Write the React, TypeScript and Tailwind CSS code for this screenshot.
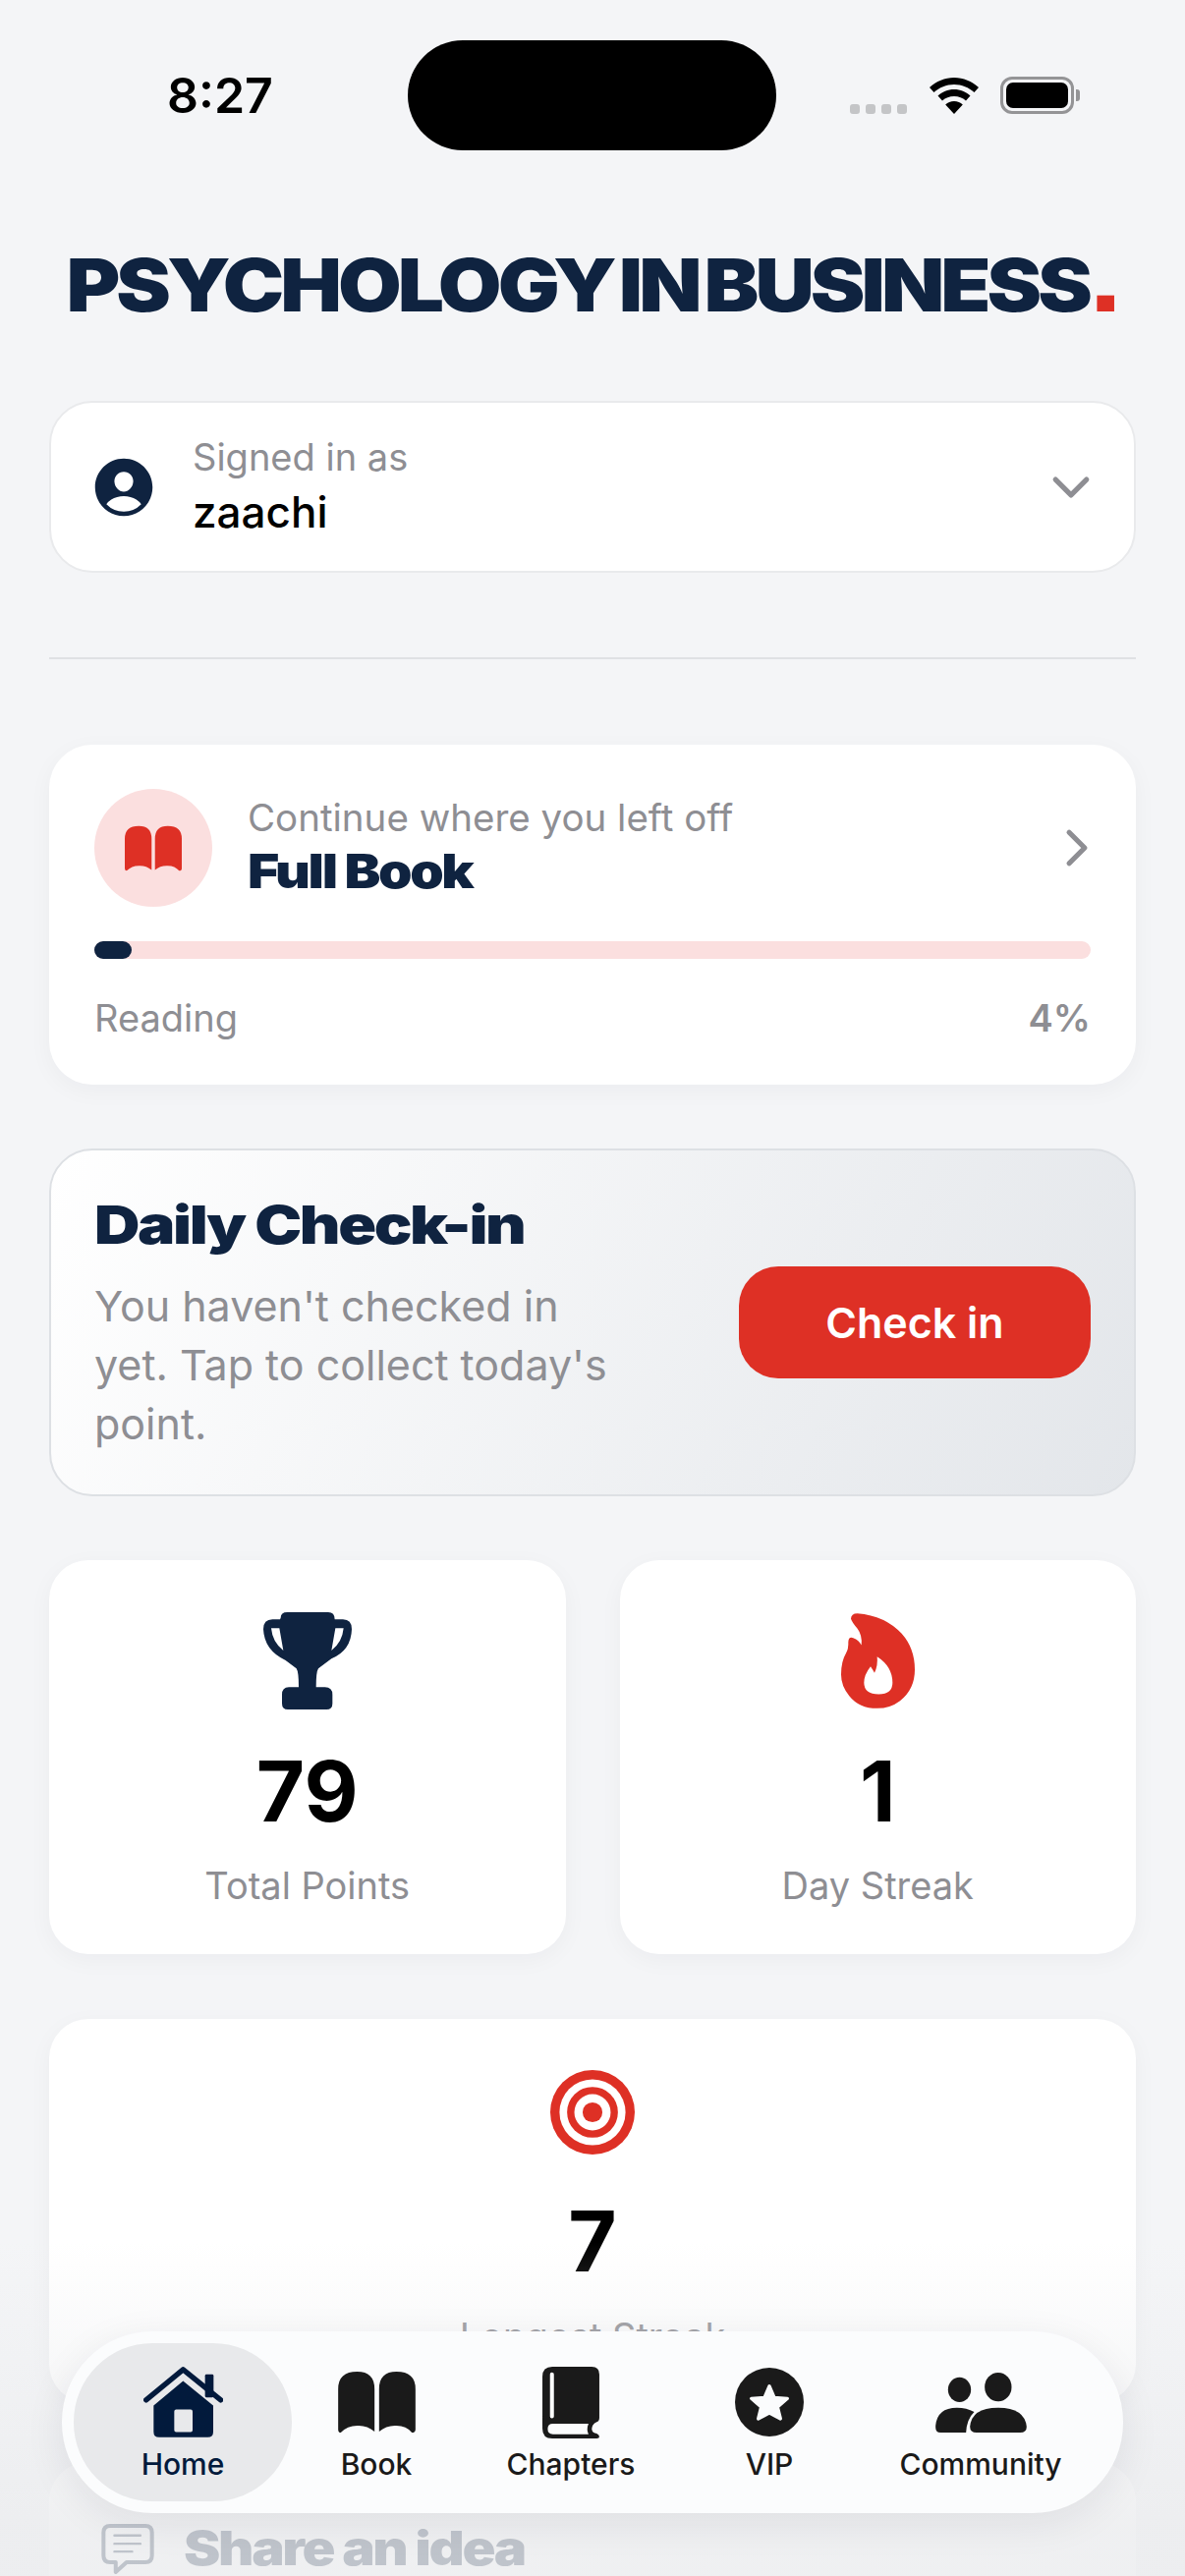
import { IoPersonCircle, IoChevronDown, IoChevronForward } from "react-icons/io5";
import type { ReactNode } from "react";

const NAVY = "#0f2340";
const RED = "#de3025";

const BookGlyph = ({ w, h, color }: { w: number; h: number; color: string }) => (
  <svg width={w} height={h} viewBox="637 42 236 186" fill={color}>
    <path d="M637 95Q637 42 695 42Q748 42 748 95V225Q725 205 695 207Q665 207 645 228Q637 228 637 218Z" />
    <path d="M762 95Q762 42 815 42Q873 42 873 95V218Q873 228 862 228Q845 207 815 207Q785 205 762 225Z" />
  </svg>
);

const TrophyIcon = () => (
  <svg width="90" height="99" viewBox="57 33 270 297">
    <path
      fill={NAVY}
      fillRule="evenodd"
      d="M110 50Q110 33 130 33H255Q275 33 275 55H300Q327 55 327 85Q325 150 265 175L225 205Q218 215 218 262H245Q268 262 268 285V312Q268 330 250 330H132Q114 330 114 312V285Q114 262 135 262H165Q165 215 158 205L125 180Q60 150 57 85Q57 55 85 55H108ZM81 82H106L118 150Q85 125 81 82ZM302 82H277L265 150Q298 125 302 82Z"
    />
  </svg>
);

const FlameIcon = () => (
  <svg width="75" height="97" viewBox="75 38 225 290">
    <path
      fill={RED}
      fillRule="evenodd"
      d="M105 55Q105 38 125 38Q210 45 260 100Q300 145 300 210Q300 270 255 305Q225 328 185 328Q130 328 100 290Q75 260 75 225Q75 185 90 160Q98 145 97 125Q98 108 112 113Q130 120 137 135Q140 105 125 85Q108 65 105 55ZM185 170Q232 200 232 250Q232 285 190 285Q145 285 145 250Q145 225 165 200Q172 210 177 220Q188 195 185 170Z"
    />
  </svg>
);

const TargetIcon = () => (
  <svg width="86" height="86" viewBox="0 0 256 256">
    <circle cx="128" cy="128" r="128" fill={RED} />
    <circle cx="128" cy="128" r="100" fill="#fff" />
    <circle cx="128" cy="128" r="77" fill={RED} />
    <circle cx="128" cy="128" r="55" fill="#fff" />
    <circle cx="128" cy="128" r="30" fill={RED} />
  </svg>
);

const HomeIcon = () => (
  <svg width="81" height="72" viewBox="42 27 243 215" fill="#021a3c">
    <rect x="230" y="50" width="26" height="70" rx="4" />
    <path d="M50 128L163 35L278 128" fill="none" stroke="#021a3c" strokeWidth="16" strokeLinecap="round" strokeLinejoin="round" />
    <path
      fillRule="evenodd"
      d="M163 70L255 145V225Q255 242 238 242H90Q73 242 73 225V145ZM142 157Q136 157 136 163V220Q136 226 142 226H186Q192 226 192 220V163Q192 157 186 157Z"
    />
  </svg>
);

const ChaptersIcon = () => (
  <svg width="58" height="73" viewBox="40 25 173 218">
    <path
      fill="#1a1a1a"
      fillRule="evenodd"
      d="M70 25H190Q213 25 213 48V180Q213 190 205 193Q190 200 190 215Q192 228 205 228Q213 232 213 238Q213 243 205 243H70Q40 243 40 213V55Q40 25 70 25ZM69 42Q63 42 63 48V176Q63 182 69 182Q75 182 75 176V48Q75 42 69 42ZM72 198Q56 198 56 214Q56 230 72 230H180Q173 215 180 198Z"
    />
  </svg>
);

const VipIcon = () => (
  <svg width="70" height="70" viewBox="615 28 210 210">
    <circle cx="720" cy="133" r="105" fill="#1a1a1a" />
    <path
      d="M720 84L735 119L775 122L745 148L754 184L720 166L686 184L695 148L665 122L705 119Z"
      fill="#fbfcfd"
      stroke="#fbfcfd"
      strokeWidth="10"
      strokeLinejoin="round"
    />
  </svg>
);

const CommunityIcon = () => (
  <svg width="93" height="61" viewBox="40 43 278 183" fill="#1a1a1a">
    <ellipse cx="113" cy="95" rx="35" ry="38" />
    <ellipse cx="231" cy="87" rx="41" ry="44" />
    <path d="M40 205Q45 150 105 150Q135 150 158 163Q135 185 133 226H55Q40 226 40 210Z" />
    <path d="M145 208Q150 150 230 150Q312 150 318 208Q318 226 298 226H165Q145 226 145 208Z" />
  </svg>
);

const ShareIcon = () => (
  <svg width="54" height="51" viewBox="38 42 161 152" fill="none" stroke={NAVY} strokeLinecap="round" strokeLinejoin="round">
    <path d="M65 48H172Q192 48 192 68V138Q192 158 172 158H115L82 188V158H65Q45 158 45 138V68Q45 48 65 48Z" strokeWidth="12" />
    <path d="M78 77H157M78 102H157M78 126H132" strokeWidth="7" />
  </svg>
);

const StatCard = ({ icon, value, label }: { icon: ReactNode; value: string; label: string }) => {
  return (
    <div className="flex-1 h-[401px] bg-white rounded-[40px] flex flex-col items-center pt-[52px] shadow-[0_6px_24px_rgba(20,30,50,0.04)]">
      <div className="h-[100px] flex items-center justify-center">{icon}</div>
      <p className="mt-[36px] text-[85px] leading-[96px] font-bold text-black">{value}</p>
      <p className="mt-[24px] text-[38px] leading-[46px] text-[#8e8e93]">{label}</p>
    </div>
  );
};

const NavItem = ({ icon, label, width, active }: { icon: ReactNode; label: string; width: string; active?: boolean }) => (
  <div
    className={`${width} h-[161px] flex flex-col items-center pt-[22px] rounded-[80px] ${active ? "bg-[#e8e9eb] text-[#021a3c]" : "text-[#1a1a1a]"}`}
  >
    <div className="h-[76px] flex items-center justify-center">{icon}</div>
    <span className="mt-[6px] text-[30px] leading-[38px] font-medium">{label}</span>
  </div>
);

export default function App() {
  return (
    <div className="relative w-[1206px] h-[2622px] overflow-hidden bg-[#f4f5f7] font-['Inter',sans-serif]">
      {/* status bar */}
      <div className="flex items-center h-[112px] mt-[41px] pl-[170px]">
        <span className="w-[245px] text-[50px] font-semibold text-black">8:27</span>
        <div className="w-[375px] h-[112px] rounded-[56px] bg-black" />
        <div className="flex items-center ml-[75px]">
          <div className="flex gap-[6px] mt-[28px]">
            <span className="w-[10px] h-[10px] rounded-[3px] bg-[#c4c5c7]" />
            <span className="w-[10px] h-[10px] rounded-[3px] bg-[#c4c5c7]" />
            <span className="w-[10px] h-[10px] rounded-[3px] bg-[#c4c5c7]" />
            <span className="w-[10px] h-[10px] rounded-[3px] bg-[#c4c5c7]" />
          </div>
          <svg className="ml-[23px]" width="50" height="37" viewBox="0 0 50 37">
            <path d="M25 0C15.500 0 7 3.700 0 10l4.500 5C10 10 17 7 25 7s15 3 20.500 8L50 10C43 3.700 34.500 0 25 0Z" fill="#000" />
            <path d="M25 12c-6.500 0-12 2.500-16.500 6.500l4.500 5c3.200-2.900 7.300-4.500 12-4.500s8.800 1.600 12 4.500l4.500-5C37 14.500 31.500 12 25 12Z" fill="#000" />
            <path d="M25 24c-3.500 0-6.500 1.300-8.800 3.400L25 37l8.800-9.600C31.500 25.300 28.500 24 25 24Z" fill="#000" />
          </svg>
          <div className="ml-[22px] w-[75px] h-[38px] rounded-[12px] border-[3px] border-[#949496] p-[3px]">
            <div className="w-full h-full rounded-[7px] bg-black" />
          </div>
          <div className="ml-[2px] w-[4px] h-[12px] rounded-r-[3px] bg-[#949496]" />
        </div>
      </div>

      <div className="px-[50px]">
        {/* title */}
        <h1 className="mt-[100px] h-[74px] text-center text-[74px] leading-[74px] font-black text-[#0f2340] tracking-[-3.5px] [word-spacing:-6px] whitespace-nowrap">
          <span className="inline-block scale-x-[1.13]">
            PSYCHOLOGY IN BUSINESS
            <span className="font-['Liberation_Sans'] font-bold text-[110px] leading-[0] text-[#de3025]">.</span>
          </span>
        </h1>

        {/* account */}
        <div className="mt-[81px] h-[175px] bg-white rounded-[44px] border-[2px] border-[#e9eaec] flex items-center pl-[38px] pr-[36px]">
          <IoPersonCircle className="w-[72px] h-[72px] text-[#0f2340]" />
          <div className="ml-[34px] flex-1 -mt-[3px]">
            <p className="text-[38px] leading-[50px] text-[#8e8e93]">Signed in as</p>
            <p className="mt-[3px] text-[44px] leading-[56px] font-medium text-black">zaachi</p>
          </div>
          <IoChevronDown className="w-[56px] h-[56px] text-[#8e8e93]" />
        </div>

        <div className="mt-[86px] h-[2px] bg-[#dfe1e4]" />

        {/* continue */}
        <div className="mt-[87px] h-[346px] bg-white rounded-[44px] px-[46px] pt-[45px] shadow-[0_6px_24px_rgba(20,30,50,0.04)]">
          <div className="flex items-center">
            <div className="w-[120px] h-[120px] rounded-full bg-[#fbdfdf] flex items-center justify-center">
              <BookGlyph w={58} h={47} color={RED} />
            </div>
            <div className="ml-[36px] flex-1 -mt-[3px]">
              <p className="text-[38.5px] leading-[50px] text-[#8e8e93]">Continue where you left off</p>
              <p className="text-[48px] leading-[60px] font-black tracking-[-2px] text-[#0f2340] origin-left scale-x-[1.15]">Full Book</p>
            </div>
            <IoChevronForward className="w-[56px] h-[56px] text-[#8e8e93] -mr-[14px]" />
          </div>
          <div className="mt-[35px] h-[18px] rounded-full bg-[#fbdfdf]">
            <div className="w-[38px] h-full rounded-full bg-[#0f2340]" />
          </div>
          <div className="mt-[36px] flex justify-between text-[38px] leading-[48px] text-[#8e8e93]">
            <span>Reading</span>
            <span className="font-semibold">4%</span>
          </div>
        </div>

        {/* check-in */}
        <div className="mt-[65px] h-[354px] rounded-[44px] border-[2px] border-[#dde0e4] bg-[linear-gradient(115deg,#ffffff_0%,#e3e6ea_100%)] flex items-center pl-[44px] pr-[44px]">
          <div className="w-[560px]">
            <h2 className="text-[54px] leading-[66px] font-black tracking-[-2px] text-[#0f2340] origin-left scale-x-[1.19]">Daily Check-in</h2>
            <p className="mt-[19px] text-[43px] leading-[60px] text-[#8e8e93]">
              You haven't checked in
              <br />
              yet. Tap to collect today's
              <br />
              point.
            </p>
          </div>
          <div className="ml-auto w-[358px] h-[114px] rounded-[40px] bg-[#de3025] flex items-center justify-center text-[43px] font-semibold text-white">
            Check in
          </div>
        </div>

        {/* stats */}
        <div className="mt-[65px] flex gap-[55px]">
          <StatCard icon={<TrophyIcon />} value="79" label="Total Points" />
          <StatCard icon={<FlameIcon />} value="1" label="Day Streak" />
        </div>

        <div className="mt-[66px] h-[391px] bg-white rounded-[40px] flex flex-col items-center pt-[52px] shadow-[0_6px_24px_rgba(20,30,50,0.04)]">
          <TargetIcon />
          <p className="mt-[41px] text-[85px] leading-[96px] font-bold text-black">7</p>
          <p className="mt-[25px] text-[38px] leading-[46px] text-[#8e8e93]">Longest Streak</p>
        </div>

        {/* share */}
        <div className="mt-[60px] h-[300px] bg-white rounded-[40px] pl-[53px] pt-[60px]">
          <div className="flex items-center gap-[30px]">
            <ShareIcon />
            <span className="text-[48px] leading-[56px] font-black tracking-[-2px] text-[#0f2340] origin-left scale-x-[1.17]">Share an idea</span>
          </div>
        </div>
      </div>

      {/* fade under the tab bar */}
      <div className="absolute left-0 right-0 bottom-0 h-[340px] bg-gradient-to-b from-[#ebecee00] to-[#ebecee] to-[85%] opacity-80" />

      {/* tab bar */}
      <div className="absolute left-[63px] top-[2373px] w-[1080px] h-[185px] rounded-[92px] bg-[#fbfcfd] flex items-center pl-[12px] shadow-[0_10px_40px_rgba(20,30,50,0.08)]">
        <NavItem active width="w-[222px]" label="Home" icon={<HomeIcon />} />
        <NavItem width="w-[172px]" label="Book" icon={<BookGlyph w={79} h={62} color="#1a1a1a" />} />
        <NavItem width="w-[224px]" label="Chapters" icon={<ChaptersIcon />} />
        <NavItem width="w-[180px]" label="VIP" icon={<VipIcon />} />
        <NavItem width="w-[250px]" label="Community" icon={<CommunityIcon />} />
      </div>
    </div>
  );
}
